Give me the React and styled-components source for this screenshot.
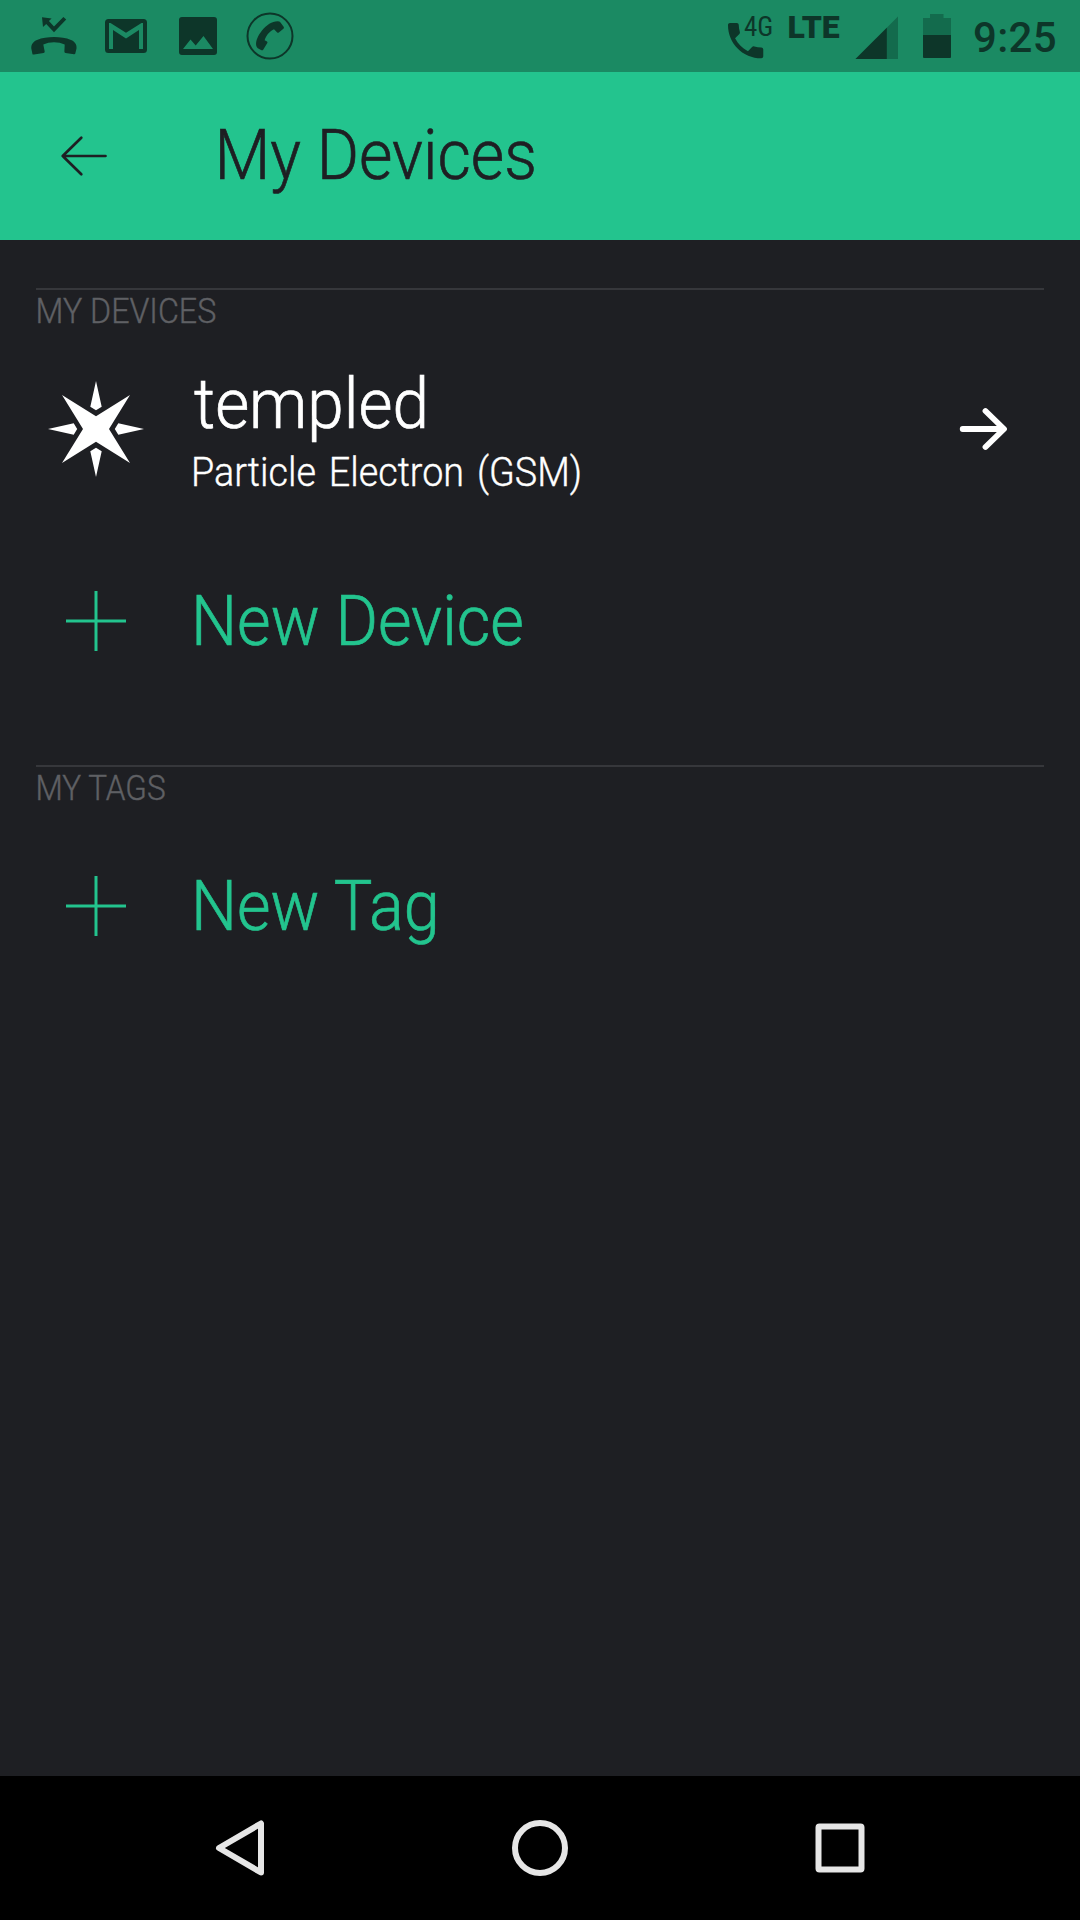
import React from "react";
import styled, { createGlobalStyle } from "styled-components";

const c = {
  green: "#23c48e",
  statusBg: "#1b8a63",
  statusInk: "#0d3629",
  statusDim: "#136b4d",
  bg: "#1e1f23",
  rule: "#36373b",
  muted: "#5f6064",
  nav: "#e6e6e6",
};

const GlobalStyle = createGlobalStyle`
  *, *::before, *::after { box-sizing: border-box; }
  html, body { margin: 0; padding: 0; background: ${c.bg}; }
  body { font-family: Roboto, "Liberation Sans", sans-serif; }
  svg { display: block; flex: none; }
`;

const Screen = styled.div`
  display: flex;
  flex-direction: column;
  width: 1080px;
  height: 1920px;
  background: ${c.bg};
  overflow: hidden;
`;

const StatusBar = styled.div`
  display: flex;
  justify-content: space-between;
  height: 72px;
  background: ${c.statusBg};
  color: ${c.statusInk};
`;

const Notifications = styled.div`
  display: flex;
  align-items: center;
  padding-left: 24px;
`;

const Indicators = styled.div`
  display: flex;
  align-items: flex-start;
  padding-right: 24px;
`;

const CallIndicator = styled.div`
  position: relative;
  width: 60px;
  height: 72px;
`;

const CallGeneration = styled.span`
  position: absolute;
  left: 19px;
  top: 12px;
  font: 400 27px/30px "Roboto Condensed", Roboto, sans-serif;
`;

const Network = styled.span`
  margin-top: 9px;
  width: 67px;
  padding-left: 2.5px;
  font-size: 32px;
  font-weight: 900;
  line-height: 36px;
  letter-spacing: 0;
`;

const Clock = styled.span`
  width: 83px;
  margin-top: 12px;
  font-size: 42px;
  font-weight: 500;
  line-height: 52px;
  letter-spacing: 0.3px;
  white-space: nowrap;
`;

const AppBar = styled.header`
  display: flex;
  align-items: center;
  height: 168px;
  padding-left: 54px;
  background: ${c.green};
  color: ${c.bg};
`;

const Title = styled.h1`
  margin: 0 0 2px 100px;
  font-size: 70px;
  font-weight: 300;
  line-height: 84px;
  white-space: nowrap;
  -webkit-text-stroke: 0.7px currentColor;
  transform: translateX(0.5px) scaleX(0.922);
  transform-origin: left center;
`;

const Content = styled.main`
  flex: 1;
  padding: 48px 36px 0;
`;

const Section = styled.section`
  height: 477px;
  border-top: 2px solid ${c.rule};
`;

const SectionLabel = styled.h2`
  margin: 0;
  padding-top: 2px;
  font-size: 35px;
  font-weight: 300;
  line-height: 40px;
  color: ${c.muted};
  white-space: nowrap;
  -webkit-text-stroke: 0.4px currentColor;
  transform: translateX(-0.5px) scaleX(${(p) => p.$stretch});
  transform-origin: left center;
`;

const Row = styled.div`
  display: flex;
  align-items: center;
  height: 192px;
  color: ${(p) => (p.$accent ? c.green : "#fff")};
  margin-top: ${(p) => p.$gap}px;
`;

const RowIcon = styled.div`
  display: flex;
  justify-content: center;
  width: 120px;
`;

const RowText = styled.div`
  flex: 1;
  padding-left: 35px;
`;

const RowTitle = styled.div`
  font-size: 70px;
  font-weight: 300;
  line-height: 80px;
  white-space: nowrap;
  -webkit-text-stroke: 0.7px currentColor;
  transform: translateX(${(p) => p.$shift || 0}px) scaleX(${(p) => p.$stretch});
  transform-origin: left center;
`;

const DeviceText = styled(RowText)`
  padding-top: 6px;
`;

const RowSubtitle = styled.div`
  font-size: 40.7px;
  font-weight: 300;
  line-height: 56px;
  word-spacing: 4px;
  white-space: nowrap;
  -webkit-text-stroke: 0.4px currentColor;
  transform: scaleX(0.927);
  transform-origin: left center;
`;

const RowArrow = styled.div`
  display: flex;
  width: 88px;
`;

const NavBar = styled.nav`
  display: flex;
  align-items: center;
  height: 144px;
  padding-left: 210px;
  gap: 240px;
  background: #000;
`;

const NotificationIcons = () => (
  <svg width="272" height="72" viewBox="24 0 272 72" fill={c.statusInk}>
    <path d="M32.5 54.3 31.3 48.5C31 44 33.5 41.500 37 40C42 37.700 48 37 54 37S66 37.700 71 40C74.500 41.500 77 44 76.500 48.500L75.300 53.500Q75 54.300 74 54.200L65.500 53Q64.300 52.800 64.400 51.500L64.700 44.500Q60 42.300 54 42.300T43.300 44.500L44.700 51.500Q44.800 52.700 43.600 53L34 54.500Q32.800 54.800 32.500 54.300Z" />
    <path d="M42 17.300 51.600 18.400 48.900 21 54 26.400 63.400 16.900 66.200 19.600 54 32.200 46.200 24 43 27Z" />
    <path fillRule="evenodd" d="M108.500 19H143.500Q147 19 147 22.500V49.500Q147 53 143.500 53H108.500Q105 53 105 49.500V22.500Q105 19 108.500 19ZM109 23V49H113V30L126 38.400 139 30V49H143V23H141.500L126 32.700 110.500 23Z" />
    <path fillRule="evenodd" d="M182 17H214Q217 17 217 20V52Q217 55 214 55H182Q179 55 179 52V20Q179 17 182 17ZM183 49H213L203.500 36 195.700 45.500 190.500 39.500Z" />
    <circle cx="270" cy="36" r="22.500" fill="none" stroke={c.statusInk} strokeWidth="2" />
    <path d="M256.200 45.500C255.500 41 258 35.500 262 30.500C266.500 25 272 21.500 277.500 21.300Q279.800 21.300 280.500 22.500L283.800 27Q284.300 28 283.400 28.700L278.800 32.500Q277.800 33.200 277 32.300L274 29.300C270 31 266 35.500 264.600 40.200L267 41.400Q267.800 42 267.300 42.900L263.200 49.700Q262.500 50.700 261.500 50.200L257.800 48.200Q256.500 47.300 256.200 45.500Z" />
  </svg>
);

const PhoneIcon = () => (
  <svg width="60" height="72" viewBox="725 0 60 72" fill={c.statusInk}>
    <path transform="translate(722.1 17.100) scale(1.960)" d="M6.620 10.790c1.440 2.830 3.760 5.140 6.590 6.590l2.200-2.200c.27-.27.67-.36 1.020-.24 1.120.37 2.330.57 3.570.57.55 0 1 .45 1 1V20c0 .55-.45 1-1 1-9.390 0-17-7.610-17-17 0-.55.45-1 1-1h3.500c.55 0 1 .45 1 1 0 1.250.2 2.450.57 3.570.11.35.03.74-.25 1.020l-2.200 2.200z" />
  </svg>
);

const SignalAndBattery = () => (
  <svg width="121" height="72" viewBox="852 0 121 72">
    <path d="M898 16.500V59H855.500Z" fill={c.statusDim} />
    <path d="M886.800 27.700V59H855.500Z" fill={c.statusInk} />
    <path d="M930 14H943.500V18H951V58H923V18H930Z" fill={c.statusDim} />
    <path d="M923 35H951V56.500Q951 58 949.500 58H924.500Q923 58 923 56.500Z" fill={c.statusInk} />
  </svg>
);

const BackArrow = () => (
  <svg width="60" height="48" viewBox="54 132 60 48" fill="none" stroke={c.bg} strokeWidth="2.700" strokeLinecap="round" strokeLinejoin="round">
    <path d="M105.500 156H62.700M81.300 137.700 62.700 156 81.300 174.300" />
  </svg>
);

const ParticleStar = () => (
  <svg width="100" height="100" viewBox="46 379 100 100" fill="#fff">
    <path d="M62 395 96 416.300 130 395 109 429 130 463 96 441.700 62 463 83 429Z" />
    <path d="M96 381 101.700 406.700 96 410.200 90.300 406.700ZM96 477 101.700 451.300 96 447.800 90.300 451.300ZM48 429 73.700 423.300 77.200 429 73.700 434.700ZM144 429 118.300 423.300 114.800 429 118.300 434.700Z" />
  </svg>
);

const PlusIcon = () => (
  <svg width="60" height="60" viewBox="0 0 60 60" stroke={c.green} strokeWidth="3">
    <path d="M30 0V60M0 30H60" />
  </svg>
);

const ForwardArrow = () => (
  <svg width="50" height="48" viewBox="956 405 50 48" fill="none" stroke="#fff" strokeWidth="5.800" strokeLinecap="round" strokeLinejoin="round" overflow="visible">
    <path d="M962.700 429H1003.500M985.500 411 1004 429 985.500 447" />
  </svg>
);

const NavIcon = ({ children }) => (
  <svg width="60" height="60" viewBox="0 0 60 60" fill="none" stroke={c.nav} strokeWidth="6" strokeLinejoin="round">
    {children}
  </svg>
);

export default function App() {
  return (
    <Screen>
      <GlobalStyle />
      <StatusBar>
        <Notifications>
          <NotificationIcons />
        </Notifications>
        <Indicators>
          <CallIndicator>
            <PhoneIcon />
            <CallGeneration>4G</CallGeneration>
          </CallIndicator>
          <Network>LTE</Network>
          <SignalAndBattery />
          <Clock>9:25</Clock>
        </Indicators>
      </StatusBar>
      <AppBar>
        <BackArrow />
        <Title>My Devices</Title>
      </AppBar>
      <Content>
        <Section>
          <SectionLabel $stretch={0.92}>MY DEVICES</SectionLabel>
          <Row $gap={1}>
            <RowIcon>
              <ParticleStar />
            </RowIcon>
            <DeviceText>
              <RowTitle $stretch={0.938} $shift={3}>templed</RowTitle>
              <RowSubtitle>Particle Electron (GSM)</RowSubtitle>
            </DeviceText>
            <RowArrow>
              <ForwardArrow />
            </RowArrow>
          </Row>
          <Row $accent $gap={0}>
            <RowIcon>
              <PlusIcon />
            </RowIcon>
            <RowText>
              <RowTitle $stretch={0.927}>New Device</RowTitle>
            </RowText>
          </Row>
        </Section>
        <Section>
          <SectionLabel $stretch={0.9}>MY TAGS</SectionLabel>
          <Row $accent $gap={1}>
            <RowIcon>
              <PlusIcon />
            </RowIcon>
            <RowText>
              <RowTitle $stretch={0.925}>New Tag</RowTitle>
            </RowText>
          </Row>
        </Section>
      </Content>
      <NavBar>
        <NavIcon>
          <path d="M9 30 51 5.500V54.500Z" />
        </NavIcon>
        <NavIcon>
          <circle cx="30" cy="30" r="25" />
        </NavIcon>
        <NavIcon>
          <rect x="8.500" y="8.500" width="43" height="43" rx="1" />
        </NavIcon>
      </NavBar>
    </Screen>
  );
}
